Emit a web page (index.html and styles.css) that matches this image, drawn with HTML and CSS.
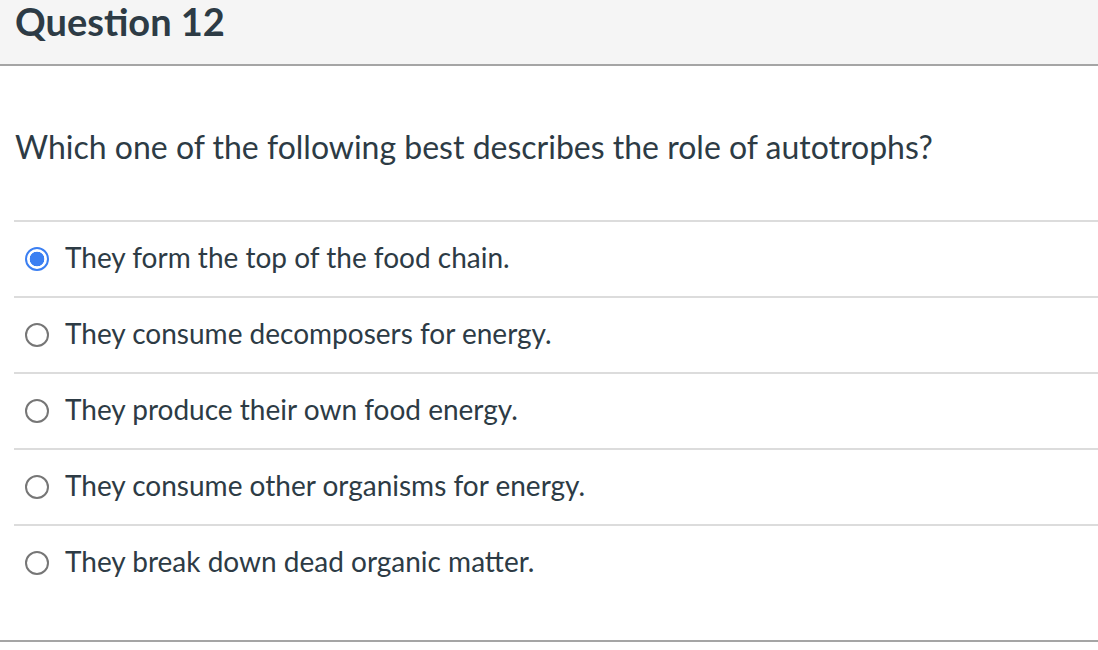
FILE: index.html
```html
<!DOCTYPE html>
<html>
<head>
<meta charset="utf-8">
<link rel="stylesheet" href="styles.css">
</head>
<body>
<div class="quiz">
  <div class="header"><h2 class="title">Question 12</h2></div>
  <div class="body">
    <p class="question">Which one of the following best describes the role of autotrophs?</p>
    <div class="answers">
      <label class="answer"><span class="radio checked"></span><span class="text">They form the top of the food chain.</span></label>
      <label class="answer"><span class="radio"></span><span class="text">They consume decomposers for energy.</span></label>
      <label class="answer"><span class="radio"></span><span class="text">They produce their own food energy.</span></label>
      <label class="answer"><span class="radio"></span><span class="text">They consume other organisms for energy.</span></label>
      <label class="answer"><span class="radio"></span><span class="text">They break down dead organic matter.</span></label>
    </div>
  </div>
  <div class="footer"></div>
</div>
</body>
</html>
```
FILE: styles.css
```css
html, body {
  margin: 0;
  padding: 0;
  background: #ffffff;
}
body {
  font-family: Lato, "Open Sans", sans-serif;
  color: #2d3b45;
}
.header {
  background: #f5f5f5;
  border-bottom: 2px solid #a5a5a5;
  padding-left: 15px;
  box-sizing: border-box;
  height: 66px;
  display: flex;
  align-items: flex-start;
}
.title {
  margin: 0;
  font-size: 38px;
  font-weight: 700;
  line-height: 42px;
  color: #2d3b45;
}
.body {
  padding-left: 14px;
}
.question {
  margin: 0;
  height: 154px;
  box-sizing: border-box;
  padding: 62px 0 0 1px;
  font-size: 32px;
  line-height: 38px;
}
.answers {
  display: flex;
  flex-direction: column;
}
.answer {
  display: flex;
  align-items: center;
  height: 76px;
  box-sizing: border-box;
  border-top: 2px solid #dcdcdc;
  padding-left: 11px;
}
.radio {
  width: 24px;
  height: 24px;
  box-sizing: border-box;
  border-radius: 50%;
  border: 2px solid #767676;
  flex: none;
  margin-right: 16px;
  background: #fff;
}
.radio.checked {
  border-color: #3b7ff2;
  background: radial-gradient(circle, #3b7ff2 0 7px, #fff 7.6px);
}
.text {
  font-size: 28px;
  line-height: 34px;
  margin-top: -4px;
}
.footer {
  margin-top: 40px;
  border-top: 2px solid #a5a5a5;
}
```
